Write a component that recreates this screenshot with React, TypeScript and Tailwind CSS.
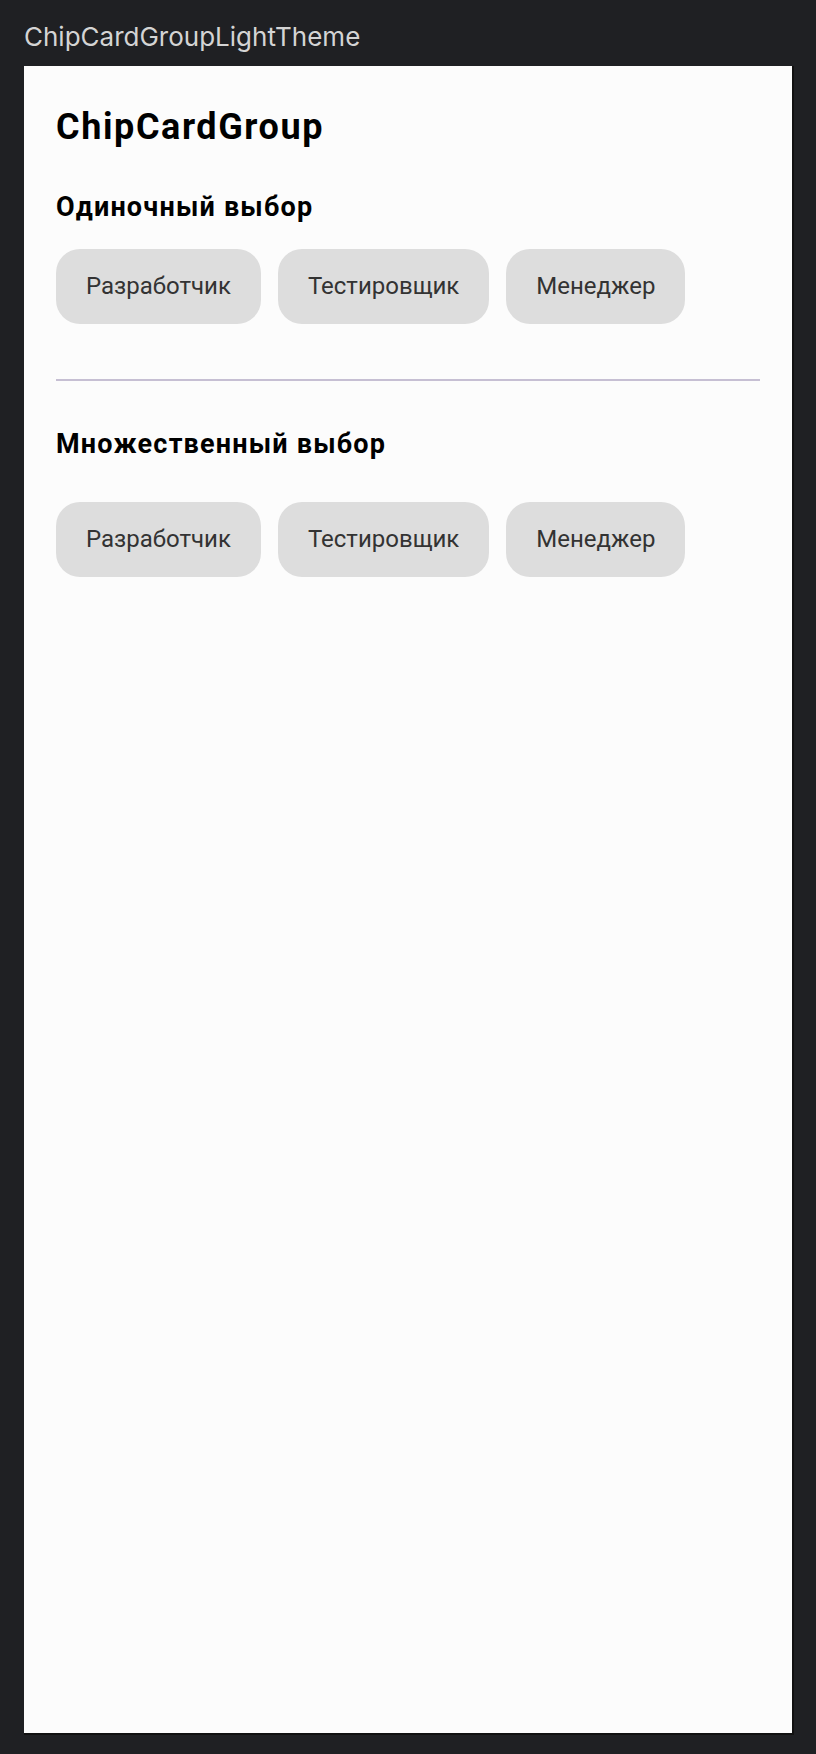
import { useState } from 'react';

const roles = ['Разработчик', 'Тестировщик', 'Менеджер'];

type ChipProps = {
  label: string;
  selected: boolean;
  onClick: () => void;
};

const Chip = ({ label, selected, onClick }: ChipProps) => (
  <button
    onClick={onClick}
    className={
      selected
        ? 'rounded-[24px] bg-[#cfc6e6] px-[30px] py-[24px] text-[24px] leading-[27px] text-[#222]'
        : 'rounded-[24px] bg-[#dddddd] px-[30px] py-[24px] text-[24px] leading-[27px] text-[#333333]'
    }
  >
    {label}
  </button>
);

export default function App() {
  const [single, setSingle] = useState<string | null>(null);
  const [multi, setMulti] = useState<string[]>([]);

  const toggleMulti = (r: string) =>
    setMulti((prev) => (prev.includes(r) ? prev.filter((x) => x !== r) : [...prev, r]));

  return (
    <div className="min-h-[1754px] bg-[#1f2023] pt-[24px] pl-[24px] font-['Inter',sans-serif]">
      <div className="text-[26px] leading-[26px] text-[#d4d4d4]">ChipCardGroupLightTheme</div>

      <div className="mt-[16px] h-[1669px] w-[770px] border-r-2 border-b-2 border-[#111] bg-[#fcfcfc] px-8 pt-[43px] font-['Roboto',sans-serif]">
        <h1 className="text-[36px] font-bold leading-[36px] tracking-[1.6px] text-black">ChipCardGroup</h1>

        {/* Single choice */}
        <h2 className="mt-[49px] text-[27px] font-bold leading-[27px] tracking-[1.2px] text-black">
          Одиночный выбор
        </h2>
        <div className="mt-[28px] flex gap-[17px]">
          {roles.map((r) => (
            <Chip key={r} label={r} selected={single === r} onClick={() => setSingle(single === r ? null : r)} />
          ))}
        </div>

        <div className="mt-[55px] h-[2px] bg-[#c6bfd3]" />

        {/* Multiple choice */}
        <h2 className="mt-[50px] text-[27px] font-bold leading-[27px] tracking-[1.2px] text-black">
          Множественный выбор
        </h2>
        <div className="mt-[44px] flex gap-[17px]">
          {roles.map((r) => (
            <Chip key={r} label={r} selected={multi.includes(r)} onClick={() => toggleMulti(r)} />
          ))}
        </div>
      </div>
    </div>
  );
}
